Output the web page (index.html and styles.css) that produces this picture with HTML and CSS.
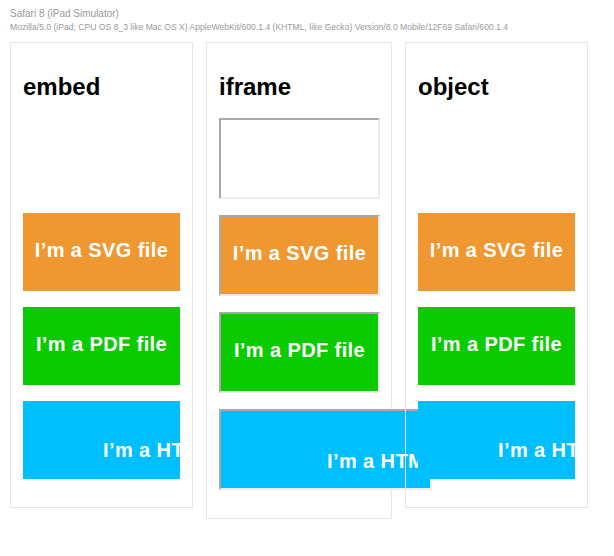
FILE: index.html
```html
<!DOCTYPE html>
<html lang="en">
<head>
<meta charset="utf-8">
<title>embed / iframe / object</title>
<link rel="stylesheet" href="styles.css">
</head>
<body>
<header class="ua">
  <div class="browser">Safari 8 (iPad Simulator)</div>
  <div class="agent">Mozilla/5.0 (iPad; CPU OS 8_3 like Mac OS X) AppleWebKit/600.1.4 (KHTML, like Gecko) Version/8.0 Mobile/12F69 Safari/600.1.4</div>
</header>
<main class="cols">
  <section class="card">
    <h2 class="title">embed</h2>
    <div class="slot blank"></div>
    <div class="slot svg"><span class="label">I’m a SVG file</span></div>
    <div class="slot pdf"><span class="label">I’m a PDF file</span></div>
    <div class="slot html"><span class="label">I’m a HTML file</span></div>
  </section>
  <section class="card card-frame">
    <h2 class="title">iframe</h2>
    <div class="frame blank"></div>
    <div class="frame svg"><span class="label">I’m a SVG file</span></div>
    <div class="frame pdf"><span class="label">I’m a PDF file</span></div>
    <div class="frame html wide"><span class="label">I’m a HTML file</span></div>
  </section>
  <section class="card">
    <h2 class="title">object</h2>
    <div class="slot blank"></div>
    <div class="slot svg"><span class="label">I’m a SVG file</span></div>
    <div class="slot pdf"><span class="label">I’m a PDF file</span></div>
    <div class="slot html"><span class="label">I’m a HTML file</span></div>
  </section>
</main>
</body>
</html>
```

FILE: styles.css
```css
html, body {
  margin: 0;
  background: #ffffff;
}
body {
  padding: 0 10px;
  font-family: "Liberation Sans", Arial, Helvetica, sans-serif;
}
.ua {
  color: #9a9a9a;
  padding-top: 7px;
}
.browser {
  font-size: 10px;
  line-height: 13px;
}
.agent {
  font-size: 8.6px;
  line-height: 14px;
  white-space: nowrap;
}
.cols {
  display: flex;
  align-items: flex-start;
  gap: 13px;
  margin-top: 8px;
}
.card {
  width: 157px;
  flex: none;
  border: 1px solid #e6e6e6;
  padding: 10px 12px 12px;
}
.card-frame {
  width: 161px;
  padding-right: 11px;
}
.title {
  margin: 20px 0 17px;
  font-size: 24px;
  line-height: 28px;
  font-weight: bold;
  color: #000;
}
.slot, .frame {
  box-sizing: border-box;
  height: 78px;
  margin-bottom: 16px;
  padding-bottom: 5px;
  display: flex;
  align-items: center;
  justify-content: center;
  overflow: hidden;
  white-space: nowrap;
}
.slot.blank {
  height: 79px;
}
.frame {
  height: 81px;
  width: 161px;
  border: 2px solid;
  border-color: #a9a9a9 #ececec #ececec #a9a9a9;
  padding-bottom: 5px;
}
.frame.wide {
  width: 213px;
}
.label {
  color: #fff;
  font-size: 20px;
  font-weight: bold;
  letter-spacing: 0.4px;
  line-height: 24px;
}
.svg { background: #ef9730; }
.pdf { background: #0acb00; }
.html {
  background: #00bfff;
  justify-content: flex-start;
  align-items: flex-start;
  padding-left: 80px;
  padding-top: 37px;
  padding-bottom: 0;
}
.frame.html {
  padding-left: 106px;
  padding-top: 38px;
  padding-bottom: 0;
}
```
